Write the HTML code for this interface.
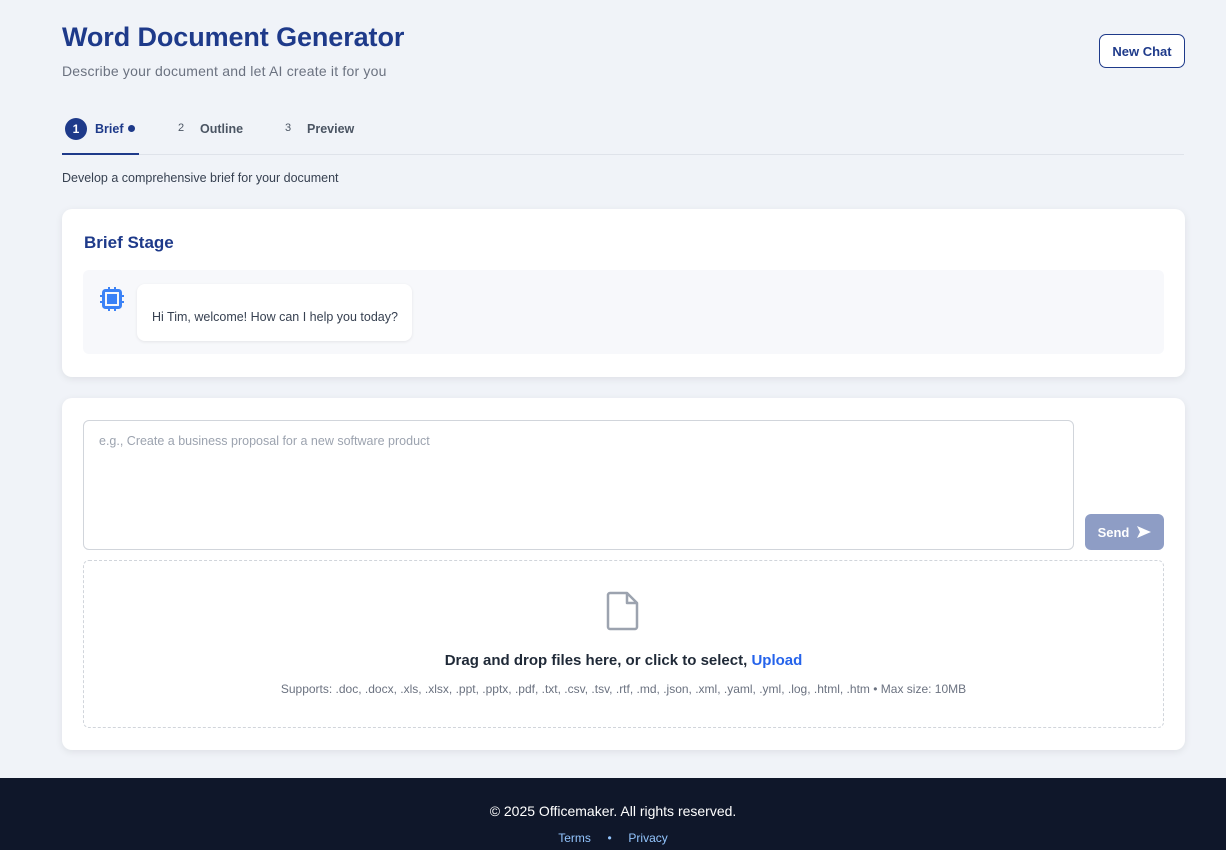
<!DOCTYPE html>
<html><head><style>
*{box-sizing:border-box;margin:0;padding:0}
body{width:1226px;height:850px;background:#f0f3f8;font-family:"Liberation Sans",sans-serif;position:relative;overflow:hidden}
.abs{position:absolute}
h1{position:absolute;left:62px;top:22px;font-size:27px;font-weight:bold;color:#1e3a8a;letter-spacing:-0.1px}
.sub{left:62px;top:63px;font-size:14px;color:#6b7280;letter-spacing:0.2px}
.nc{left:1099px;top:34px;width:86px;height:34px;border:1px solid #1e3a8a;border-radius:7px;background:#fff;color:#1e3a8a;font-size:13px;font-weight:bold;display:flex;align-items:center;justify-content:center}
.tab{top:122px;font-size:12.5px;color:#4b5563;font-weight:bold}
.card{background:#fff;border-radius:10px;box-shadow:0 2px 8px rgba(0,0,0,0.08)}
</style></head><body>
<h1>Word Document Generator</h1>
<div class="abs sub">Describe your document and let AI create it for you</div>
<div class="abs nc">New Chat</div>
<div class="abs" style="left:65px;top:118px;width:22px;height:22px;border-radius:50%;background:#1e3a8a;color:#fff;font-size:12px;font-weight:bold;display:flex;align-items:center;justify-content:center">1</div>
<div class="abs tab" style="left:95px;color:#1e3a8a">Brief</div>
<div class="abs" style="left:128px;top:125px;width:7px;height:7px;border-radius:50%;background:#1e3a8a"></div>
<div class="abs tab" style="left:178px;font-size:11px;font-weight:normal;top:122px">2</div>
<div class="abs tab" style="left:200px">Outline</div>
<div class="abs tab" style="left:285px;font-size:11px;font-weight:normal;top:122px">3</div>
<div class="abs tab" style="left:307px">Preview</div>
<div class="abs" style="left:62px;top:154px;width:1122px;height:1px;background:#dfe3ea"></div>
<div class="abs" style="left:62px;top:153px;width:77px;height:2px;background:#1e3a8a"></div>
<div class="abs" style="left:62px;top:171px;font-size:12.5px;color:#374151">Develop a comprehensive brief for your document</div>

<div class="abs card" style="left:62px;top:209px;width:1123px;height:168px">
 <div class="abs" style="left:22px;top:24px;font-size:17px;font-weight:bold;color:#1e3a8a">Brief Stage</div>
 <div class="abs" style="left:21px;top:61px;width:1081px;height:84px;background:#f7f8fb;border-radius:6px">
  <svg class="abs" style="left:17px;top:17px" width="24" height="24" viewBox="0 0 24 24"><rect x="3.5" y="3.5" width="17" height="17" rx="2" fill="none" stroke="#3b82f6" stroke-width="3"/><rect x="7" y="7" width="10" height="10" fill="#3b82f6"/><g stroke="#3b82f6" stroke-width="2"><path d="M9 0v3M15 0v3M9 21v3M15 21v3M0 9h3M0 15h3M21 9h3M21 15h3"/></g></svg>
  <div class="abs" style="left:54px;top:14px;width:275px;height:57px;background:#fff;border-radius:8px;box-shadow:0 1px 3px rgba(0,0,0,0.08);font-size:12.5px;color:#374151;padding:26px 0 0 15px">Hi Tim, welcome! How can I help you today?</div>
 </div>
</div>

<div class="abs card" style="left:62px;top:398px;width:1123px;height:352px">
 <div class="abs" style="left:21px;top:22px;width:991px;height:130px;border:1px solid #d1d5db;border-radius:6px;font-size:12.5px;color:#9ca3af;padding:13px 15px">e.g., Create a business proposal for a new software product</div>
 <div class="abs" style="left:1023px;top:116px;width:79px;height:36px;background:#8e9dc5;border-radius:6px;color:#fff;font-size:13px;font-weight:bold;display:flex;align-items:center;justify-content:center;gap:8px">Send <svg width="14" height="12" viewBox="0 0 14 12"><path d="M0 0L14 6L0 12L3 6Z" fill="#fff"/></svg></div>
 <div class="abs" style="left:21px;top:162px;width:1081px;height:168px;border:1px dashed #d1d5db;border-radius:6px">
  <svg class="abs" style="left:522px;top:30px" width="34" height="40" viewBox="0 0 34 40"><path d="M4 2h17l10 10v24a2 2 0 0 1-2 2H4a2 2 0 0 1-2-2V4a2 2 0 0 1 2-2z M21 2v10h10" fill="none" stroke="#9ca3af" stroke-width="2.5" stroke-linejoin="round"/></svg>
  <div class="abs" style="left:0;right:0;top:91px;text-align:center;font-size:15px;font-weight:bold;color:#1f2937">Drag and drop files here, or click to select, <span style="color:#2563eb">Upload</span></div>
  <div class="abs" style="left:0;right:0;top:121px;text-align:center;font-size:12px;color:#6b7280">Supports: .doc, .docx, .xls, .xlsx, .ppt, .pptx, .pdf, .txt, .csv, .tsv, .rtf, .md, .json, .xml, .yaml, .yml, .log, .html, .htm • Max size: 10MB</div>
 </div>
</div>

<div class="abs" style="left:0;top:778px;width:1226px;height:72px;background:#0f172a">
 <div class="abs" style="left:0;right:0;top:25px;text-align:center;color:#fff;font-size:14px">© 2025 Officemaker. All rights reserved.</div>
 <div class="abs" style="left:0;right:0;top:53px;text-align:center;color:#93c5fd;font-size:12px">Terms &nbsp;&nbsp;&nbsp;&nbsp;•&nbsp;&nbsp;&nbsp;&nbsp; Privacy</div>
</div>
</body></html>
